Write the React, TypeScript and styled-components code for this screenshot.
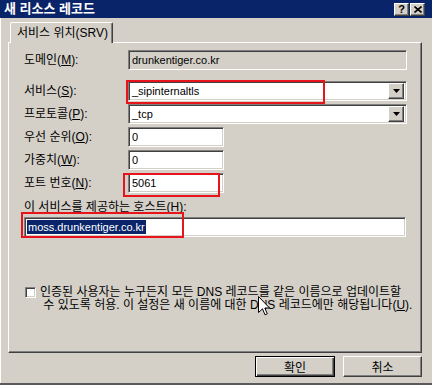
import styled, { createGlobalStyle, css } from "styled-components";

const FACE = "#d4d0c8";
const NAVY = "#0a246a";
const RED = "#e8141c";

const GlobalStyle = createGlobalStyle`
  html, body { margin: 0; padding: 0; background: #fff; }
  body {
    font-family: "Liberation Sans", "Noto Sans CJK KR", sans-serif;
    font-size: 12px;
    color: #000;
  }
  * { box-sizing: border-box; }
`;

// ── 3D borders ──────────────────────────────────────────
const sunken = css`
  border: 1px solid;
  border-color: #808080 #fff #fff #808080;
  box-shadow: inset 1px 1px 0 #404040, inset -1px -1px 0 ${FACE};
`;

const raised = css`
  border: 1px solid;
  border-color: #fff #404040 #404040 #fff;
  box-shadow: inset -1px -1px 0 #808080;
  background: ${FACE};
`;

// ── window ──────────────────────────────────────────────
const Window = styled.div`
  position: relative;
  width: 432px;
  height: 385px;
  background: ${FACE};
  border-bottom: 2px solid #5a5a5a;
  display: flex;
  flex-direction: column;
  overflow: hidden;
`;

const TitleBar = styled.div`
  height: 18px;
  flex-shrink: 0;
  background: ${NAVY};
  display: flex;
  align-items: center;
  padding: 0 7px 0 4px;
`;

const TitleText = styled.div`
  flex: 1;
  color: #fff;
  font-weight: 700;
  font-size: 13px;
  line-height: 18px;
`;

const CaptionButton = styled.div`
  ${raised};
  width: 15px;
  height: 13px;
  display: flex;
  align-items: center;
  justify-content: center;
  font-weight: 700;
  font-size: 11px;
  line-height: 1;
  & + & { margin-left: 1px; }
`;

const Body = styled.div`
  flex: 1;
  border-left: 1px solid #fff;
  padding: 4px 10px 0 7px;
  display: flex;
  flex-direction: column;
`;

const TabStrip = styled.div`
  display: flex;
  padding-left: 2px;
  height: 20px;
`;

const Tab = styled.div`
  position: relative;
  z-index: 1;
  width: 103px;
  height: 21px;
  background: ${FACE};
  border-top: 1px solid #fff;
  border-left: 1px solid #fff;
  border-right: 1px solid #404040;
  box-shadow: inset -1px 0 0 #808080;
  border-radius: 2px 2px 0 0;
  padding: 3px 0 0 6px;
  line-height: 14px;
`;

const Panel = styled.div`
  width: 414px;
  height: 311px;
  border: 1px solid;
  border-color: #fff #404040 #404040 #fff;
  box-shadow: inset -1px -1px 0 #808080;
  padding: 7px 14px 0 15px;
`;

const FormGrid = styled.div`
  display: grid;
  grid-template-columns: 104px 1fr;
  row-gap: 3px;
  align-items: center;
`;

const Label = styled.div<{ $gap?: number }>`
  line-height: 14px;
  margin-bottom: ${({ $gap }) => $gap ?? 0}px;
`;

const Field = styled.div<{ $w?: number; $readOnly?: boolean; $gap?: number }>`
  ${sunken};
  height: 20px;
  width: ${({ $w }) => ($w ? `${$w}px` : "100%")};
  background: ${({ $readOnly }) => ($readOnly ? FACE : "#fff")};
  display: flex;
  align-items: center;
  padding: 0 2px 0 3px;
  margin-bottom: ${({ $gap }) => $gap ?? 0}px;
  font-size: 11px;
  line-height: 13px;
  white-space: nowrap;
`;

const ComboText = styled.div`
  flex: 1;
`;

const DropButton = styled.div`
  ${raised};
  width: 16px;
  height: 16px;
  display: flex;
  align-items: center;
  justify-content: center;
`;

const HostLabel = styled.div`
  margin-top: 7px;
  line-height: 14px;
`;

const HostField = styled(Field)`
  margin-top: 3px;
  width: 382px;
  padding-left: 2px;
`;

const Selection = styled.span`
  background: ${NAVY};
  color: #fff;
  padding: 0 1px;
  line-height: 14px;
`;

const CheckRow = styled.div`
  margin-top: 49px;
  display: flex;
  align-items: flex-start;
  gap: 4px;
  padding-left: 1px;
`;

const CheckBox = styled.div`
  ${sunken};
  width: 11px;
  height: 11px;
  margin-top: 1px;
  background: #fff;
  flex-shrink: 0;
`;

const CheckText = styled.div`
  line-height: 13px;
  white-space: nowrap;
`;

const ButtonRow = styled.div`
  display: flex;
  justify-content: flex-end;
  gap: 8px;
  margin-top: 3px;
`;

const PushButton = styled.div<{ $default?: boolean; $w: number }>`
  width: ${({ $w }) => $w}px;
  height: 21px;
  display: flex;
  align-items: center;
  justify-content: center;
  ${({ $default }) =>
    $default
      ? css`
          border: 1px solid #000;
          box-shadow: inset 1px 1px 0 #fff, inset -1px -1px 0 #404040, inset -2px -2px 0 #808080;
        `
      : raised}
`;

// ── overlays ────────────────────────────────────────────
const Mark = styled.div<{ $x: number; $y: number; $w: number; $h: number }>`
  position: absolute;
  left: ${({ $x }) => $x}px;
  top: ${({ $y }) => $y}px;
  width: ${({ $w }) => $w}px;
  height: ${({ $h }) => $h}px;
  border: 2px solid ${RED};
  pointer-events: none;
`;

const Cursor = styled.svg`
  position: absolute;
  left: 258px;
  top: 296px;
`;

function DownArrow() {
  return (
    <svg width="7" height="4" viewBox="0 0 7 4">
      <polygon points="0,0 7,0 3.5,4" fill="#000" />
    </svg>
  );
}

function Combo({ value }: { value: string }) {
  return (
    <Field>
      <ComboText>{value}</ComboText>
      <DropButton>
        <DownArrow />
      </DropButton>
    </Field>
  );
}

export default function App() {
  return (
    <>
      <GlobalStyle />
      <Window>
        <TitleBar>
          <TitleText>새 리소스 레코드</TitleText>
          <CaptionButton>?</CaptionButton>
          <CaptionButton>
            <svg width="8" height="7" viewBox="0 0 8 7">
              <path d="M0.5 0.5 L7.5 6.5 M7.5 0.5 L0.5 6.5" stroke="#000" strokeWidth="1.6" />
            </svg>
          </CaptionButton>
        </TitleBar>

        <Body>
          <TabStrip>
            <Tab>서비스 위치(SRV)</Tab>
          </TabStrip>

          <Panel>
            <FormGrid>
              <Label $gap={8}>
                도메인(<u>M</u>):
              </Label>
              <Field $readOnly $gap={8}>drunkentiger.co.kr</Field>

              <Label>
                서비스(<u>S</u>):
              </Label>
              <Combo value="_sipinternaltls" />

              <Label>
                프로토콜(<u>P</u>):
              </Label>
              <Combo value="_tcp" />

              <Label>
                우선 순위(<u>O</u>):
              </Label>
              <Field $w={96}>0</Field>

              <Label>
                가중치(<u>W</u>):
              </Label>
              <Field $w={96}>0</Field>

              <Label>
                포트 번호(<u>N</u>):
              </Label>
              <Field $w={96}>5061</Field>
            </FormGrid>

            <HostLabel>
              이 서비스를 제공하는 호스트(<u>H</u>):
            </HostLabel>
            <HostField>
              <Selection>moss.drunkentiger.co.kr</Selection>
            </HostField>

            <CheckRow>
              <CheckBox />
              <CheckText>
                인증된 사용자는 누구든지 모든 DNS 레코드를 같은 이름으로 업데이트할
                <br />
                &nbsp;수 있도록 허용. 이 설정은 새 이름에 대한 DNS 레코드에만 해당됩니다(<u>U</u>).
              </CheckText>
            </CheckRow>
          </Panel>

          <ButtonRow>
            <PushButton $default $w={80}>확인</PushButton>
            <PushButton $w={79}>취소</PushButton>
          </ButtonRow>
        </Body>

        <Mark $x={126} $y={80} $w={199} $h={24} />
        <Mark $x={123} $y={173} $w={97} $h={24} />
        <Mark $x={21} $y={212} $w={163} $h={26} />

        <Cursor width="12" height="20" viewBox="0 0 12 20">
          <path
            d="M0.5 0.5 L0.5 16.5 L4.5 12.8 L7 18.8 L9.3 17.8 L6.8 12 L11.5 12 Z"
            fill="#fff"
            stroke="#000"
            strokeWidth="1"
            strokeLinejoin="miter"
          />
        </Cursor>
      </Window>
    </>
  );
}
